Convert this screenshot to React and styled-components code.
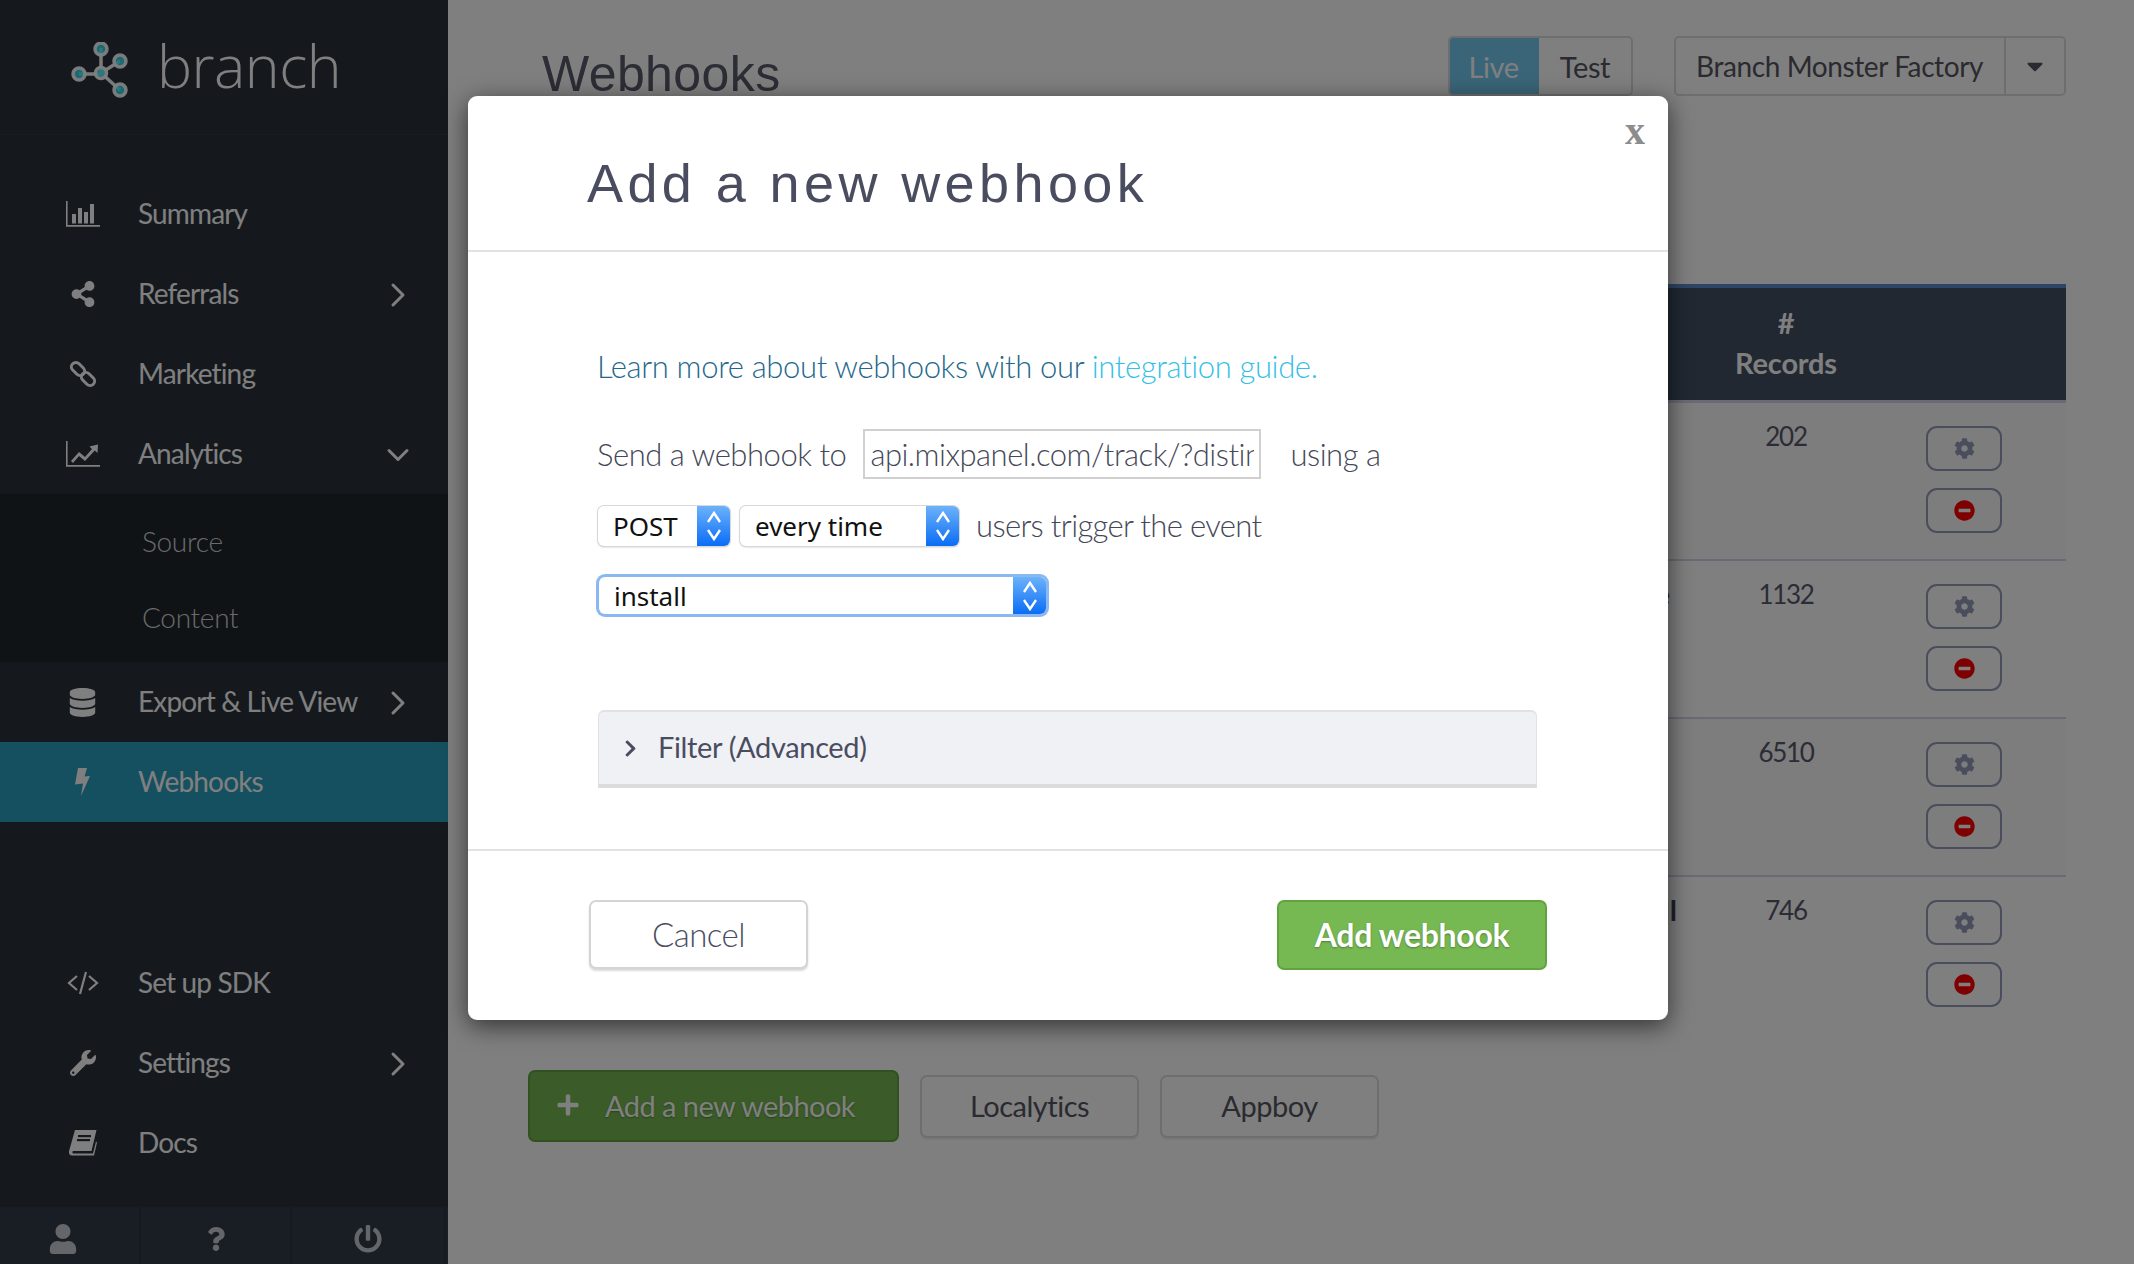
import styled, { createGlobalStyle } from "styled-components";
import {
  FaShareAlt,
  FaDatabase,
  FaWrench,
  FaUser,
  FaQuestion,
  FaPowerOff,
  FaCog,
  FaMinusCircle,
  FaPlus,
  FaCaretDown,
  FaChevronRight,
} from "react-icons/fa";
import { LuChevronRight, LuChevronDown } from "react-icons/lu";

const BarsIcon = () => (
  <svg width="34" height="26" viewBox="0 0 34 26" fill="currentColor">
    <path d="M0 0h1.6v24H34v1.8H0z" />
    <rect x="6" y="13" width="4" height="9.5" />
    <rect x="12" y="7" width="4" height="15.5" />
    <rect x="18" y="11" width="4" height="11.5" />
    <rect x="24" y="3" width="4" height="19.5" />
  </svg>
);

const LineChartIcon = () => (
  <svg width="34" height="26" viewBox="0 0 34 26" fill="currentColor">
    <path d="M0 0h1.6v24H34v1.8H0z" />
    <path d="M5 20l8-9 6 5 7-8-2.6-2.400L32 3.500 31.500 12l-2.700-2.600L19 20l-6-5-6 7z" />
  </svg>
);

const LinkIcon = () => (
  <svg width="28" height="28" viewBox="0 0 28 28" fill="none" stroke="currentColor" strokeWidth="3">
    <rect x="1.500" y="4.500" width="15" height="9" rx="4.500" transform="rotate(45 9 9)" />
    <rect x="11.500" y="14.500" width="15" height="9" rx="4.500" transform="rotate(45 19 19)" />
  </svg>
);

const CodeIcon = () => (
  <svg width="32" height="26" viewBox="0 0 32 26" fill="none" stroke="currentColor" strokeWidth="2.200">
    <path d="M10 6L2 13l8 7M22 6l8 7-8 7M19 2l-6 22" />
  </svg>
);

const BoltIcon = () => (
  <svg width="16" height="28" viewBox="0 0 16 28" fill="currentColor">
    <path d="M3 0h9L9.500 8.500l5.500-.5L6 28l2-12.500-8 1z" />
  </svg>
);

const BookIcon = () => (
  <svg width="28" height="26" viewBox="0 0 28 26" fill="currentColor">
    <path d="M6 0h21.500l-5 21H4.500c-1.500 0-1.500 2.500 0 2.500H24l3-12 1 1-3 13H3c-3 0-3.500-3-2.800-5z" />
    <rect x="9" y="5" width="13" height="2.200" fill="#2a323c" />
    <rect x="8" y="9" width="13" height="2.200" fill="#2a323c" />
  </svg>
);

const Logo = () => (
  <LogoMark width="60" height="60" viewBox="0 0 60 60">
    <g stroke="#ffffff" strokeOpacity="0.95" strokeWidth="3.500">
      <path d="M30 6V31M30 31L49 19M8 32H30M30 31L49 48" />
      <g fill="#3ef0ff" fillOpacity="0.85">
        <circle cx="30" cy="7" r="6" />
        <circle cx="49" cy="19" r="6" />
        <circle cx="8" cy="32" r="6" />
        <circle cx="30" cy="31" r="5.500" />
        <circle cx="49" cy="48" r="6" />
      </g>
    </g>
  </LogoMark>
);

const Stepper = () => (
  <StepperBox>
    <svg width="16" height="32" viewBox="0 0 16 32" fill="none" stroke="#fff" strokeWidth="2.400">
      <path d="M2 12l6-9 6 9M2 20l6 9 6-9" />
    </svg>
  </StepperBox>
);

const topNav = [
  { label: "Summary", icon: <BarsIcon /> },
  { label: "Referrals", icon: <FaShareAlt size={26} />, arrow: "right" },
  { label: "Marketing", icon: <LinkIcon /> },
  { label: "Analytics", icon: <LineChartIcon />, arrow: "down" },
];

const lowerNav = [
  { label: "Set up SDK", icon: <CodeIcon /> },
  { label: "Settings", icon: <FaWrench size={26} />, arrow: "right" },
  { label: "Docs", icon: <BookIcon /> },
];

const rows = [
  { records: 202, name: "", pad: 29 },
  { records: 1132, name: "Purchase", pad: 36 },
  { records: 6510, name: "", pad: 29 },
  { records: 746, name: "Install", pad: 29 },
];

function NavRow({ item, active }) {
  return (
    <NavItem $active={active}>
      <NavIcon>{item.icon}</NavIcon>
      <NavLabel>{item.label}</NavLabel>
      {item.arrow === "right" && (
        <NavArrow>
          <LuChevronRight size={40} strokeWidth={1.8} />
        </NavArrow>
      )}
      {item.arrow === "down" && (
        <NavArrow>
          <LuChevronDown size={36} strokeWidth={2} />
        </NavArrow>
      )}
    </NavItem>
  );
}

function App() {
  return (
    <Page>
      <GlobalStyle />
      <Sidebar>
        <Brand>
          <Logo />
          <BrandName>branch</BrandName>
        </Brand>
        <NavGroup>
          {topNav.map((item) => (
            <NavRow key={item.label} item={item} />
          ))}
          <SubMenu>
            <SubItem>Source</SubItem>
            <SubItem>Content</SubItem>
          </SubMenu>
          <NavRow item={{ label: "Export & Live View", icon: <FaDatabase size={29} />, arrow: "right" }} />
          <NavRow item={{ label: "Webhooks", icon: <BoltIcon /> }} active />
        </NavGroup>
        <LowerGroup>
          {lowerNav.map((item) => (
            <NavRow key={item.label} item={item} />
          ))}
        </LowerGroup>
        <SideFooter>
          <FootCell $w={141} $shift={14}>
            <FaUser size={30} />
          </FootCell>
          <FootCell $w={151}>
            <FaQuestion size={24} />
          </FootCell>
          <FootCell $w={154}>
            <FaPowerOff size={28} />
          </FootCell>
        </SideFooter>
      </Sidebar>

      <Main>
        <TopBar>
          <PageTitle>Webhooks</PageTitle>
          <Controls>
            <ModeGroup>
              <ModeButton $active>Live</ModeButton>
              <ModeButton>Test</ModeButton>
            </ModeGroup>
            <AppPicker>
              <AppName>Branch Monster Factory</AppName>
              <AppCaret>
                <FaCaretDown size={26} />
              </AppCaret>
            </AppPicker>
          </Controls>
        </TopBar>

        <Table>
          <TableHead>
            <span />
            <HeadCell>
              <div>#</div>
              <div>Records</div>
            </HeadCell>
            <span />
          </TableHead>
          {rows.map((row, i) => (
            <TableRow key={row.records} $alt={i % 2 === 0} $last={i === rows.length - 1}>
              <NameCell $pad={row.pad}>{row.name}</NameCell>
              <NumberCell>{row.records}</NumberCell>
              <ActionCell>
                <IconButton $color="#949ab8">
                  <FaCog size={21} />
                </IconButton>
                <IconButton $color="#ff0000">
                  <FaMinusCircle size={21} />
                </IconButton>
              </ActionCell>
            </TableRow>
          ))}
        </Table>

        <BottomActions>
          <AddNewButton $w={371} $h={72} $size={29} $weight={400}>
            <FaPlus size={24} />
            <span>Add a new webhook</span>
          </AddNewButton>
          <PlainButton $w={219} $h={63}>
            Localytics
          </PlainButton>
          <PlainButton $w={219} $h={63}>
            Appboy
          </PlainButton>
        </BottomActions>
      </Main>

      <Overlay>
        <Modal>
          <CloseMark>x</CloseMark>
          <ModalHeader>
            <ModalTitle>Add a new webhook</ModalTitle>
          </ModalHeader>
          <ModalBody>
            <LearnLine>
              Learn more about webhooks with our <LearnLink>integration guide.</LearnLink>
            </LearnLine>
            <SendRow>
              <FormText>Send a webhook to</FormText>
              <UrlInput readOnly value="api.mixpanel.com/track/?distinct_id=" />
              <FormText>using a</FormText>
            </SendRow>
            <SelectRow>
              <NativeSelect $w={132}>
                <SelectValue>POST</SelectValue>
                <Stepper />
              </NativeSelect>
              <NativeSelect $w={219}>
                <SelectValue>every time</SelectValue>
                <Stepper />
              </NativeSelect>
              <TriggerText>users trigger the event</TriggerText>
            </SelectRow>
            <FocusRow>
              <NativeSelect $w={447} $focus>
                <SelectValue>install</SelectValue>
                <Stepper />
              </NativeSelect>
            </FocusRow>
            <FilterBar>
              <FaChevronRight size={19} />
              <FilterLabel>Filter (Advanced)</FilterLabel>
            </FilterBar>
          </ModalBody>
          <ModalFooter>
            <CancelButton>Cancel</CancelButton>
            <GreenButton $w={270} $h={70} $size={32} $weight={700}>
              <ButtonLabel>Add webhook</ButtonLabel>
            </GreenButton>
          </ModalFooter>
        </Modal>
      </Overlay>
    </Page>
  );
}

export default App;

const GlobalStyle = createGlobalStyle`
  html, body {
    margin: 0;
    padding: 0;
    background: #fff;
  }
  body {
    font-family: "Lato", "Open Sans", sans-serif;
    color: #565666;
  }
  * {
    box-sizing: border-box;
  }
`;

const Page = styled.div`
  display: flex;
  width: 2134px;
  height: 1264px;
  overflow: hidden;
  position: relative;
`;

const Sidebar = styled.aside`
  width: 448px;
  height: 100%;
  flex: none;
  display: flex;
  flex-direction: column;
  background: #2a323c;
  color: #fff;
`;

const Brand = styled.div`
  height: 135px;
  display: flex;
  align-items: center;
  gap: 26px;
  padding: 0 0 0 71px;
  border-bottom: 1px solid #323a44;
`;

const LogoMark = styled.svg`
  margin-top: 9px;
  flex: none;
`;

const BrandName = styled.div`
  font-family: "Open Sans", sans-serif;
  font-weight: 300;
  font-size: 59px;
  letter-spacing: -0.5px;
  line-height: 1;
  margin-top: -4px;
`;

const NavGroup = styled.nav`
  margin-top: 39px;
  display: flex;
  flex-direction: column;
`;

const LowerGroup = styled.nav`
  margin-top: auto;
  display: flex;
  flex-direction: column;
`;

const NavItem = styled.div`
  height: 80px;
  display: flex;
  align-items: center;
  background: ${(p) => (p.$active ? "#2aa0c0" : "transparent")};
`;

const NavIcon = styled.span`
  width: 111px;
  margin-left: 27px;
  flex: none;
  display: flex;
  justify-content: center;
`;

const NavLabel = styled.span`
  flex: 1;
  margin-top: -3px;
  white-space: nowrap;
  font-size: 28px;
  font-weight: 400;
  letter-spacing: -0.85px;
`;

const NavArrow = styled.span`
  width: 40px;
  margin-right: 30px;
  flex: none;
  display: flex;
  justify-content: center;
  margin-top: 2px;
`;

const SubMenu = styled.div`
  height: 168px;
  background: #1e262c;
  padding: 9px 0 0 142px;
  display: flex;
  flex-direction: column;
`;

const SubItem = styled.div`
  height: 76px;
  display: flex;
  align-items: center;
  font-size: 28px;
  font-weight: 300;
  letter-spacing: -0.3px;
  color: #d4d4d4;
`;

const SideFooter = styled.div`
  margin-top: 22px;
  height: 59px;
  display: flex;
  background: #323c48;
  border-top: 2px solid #2c343e;
`;

const FootCell = styled.div`
  width: ${(p) => p.$w}px;
  display: flex;
  align-items: center;
  justify-content: center;
  padding-top: 6px;
  padding-right: ${(p) => p.$shift || 0}px;
  color: #c8ccd2;
  border-right: 2px solid #2c343e;
`;

const Main = styled.main`
  flex: 1;
  padding: 0 68px 0 80px;
  display: flex;
  flex-direction: column;
  min-width: 0;
`;

const TopBar = styled.div`
  height: 284px;
  display: flex;
  justify-content: space-between;
  align-items: flex-start;
`;

const PageTitle = styled.h1`
  margin: 44px 0 0 14px;
  font-family: "Liberation Sans", sans-serif;
  font-size: 50px;
  line-height: 60px;
  font-weight: 400;
  letter-spacing: 0.4px;
  color: #585a6a;
`;

const Controls = styled.div`
  margin-top: 36px;
  display: flex;
  gap: 41px;
`;

const ModeGroup = styled.div`
  width: 185px;
  height: 60px;
  display: flex;
  border: 2px solid #ddd;
  border-radius: 5px;
  overflow: hidden;
`;

const ModeButton = styled.div`
  flex: ${(p) => (p.$active ? "0 0 89px" : "1")};
  display: flex;
  align-items: center;
  justify-content: center;
  padding-right: ${(p) => (p.$active ? 2 : 0)}px;
  font-size: 29px;
  font-weight: 400;
  letter-spacing: -0.4px;
  color: ${(p) => (p.$active ? "#fff" : "#555560")};
  background: ${(p) => (p.$active ? "#74cbf0" : "transparent")};
`;

const AppPicker = styled.div`
  width: 392px;
  height: 60px;
  display: flex;
  border: 2px solid #ddd;
  border-radius: 5px;
`;

const AppName = styled.div`
  flex: 1;
  display: flex;
  align-items: center;
  padding-left: 20px;
  font-size: 28px;
  font-weight: 400;
  letter-spacing: -0.4px;
  color: #555560;
  border-right: 2px solid #ddd;
`;

const AppCaret = styled.div`
  width: 58px;
  display: flex;
  align-items: center;
  justify-content: center;
  color: #555560;
`;

const Table = styled.div`
  display: flex;
  flex-direction: column;
`;

const TableHead = styled.div`
  height: 119px;
  display: grid;
  grid-template-columns: 1178px 160px 1fr;
  background: #425064;
  border-top: 4px solid #5e8acc;
  border-bottom: 3px solid #d4d4ec;
`;

const HeadCell = styled.div`
  display: flex;
  flex-direction: column;
  align-items: center;
  padding-top: 15px;
  color: #fff;
  font-size: 29px;
  font-weight: 700;
  line-height: 40px;
  letter-spacing: -0.2px;
`;

const TableRow = styled.div`
  height: 158px;
  display: grid;
  grid-template-columns: 1178px 160px 1fr;
  background: ${(p) => (p.$alt ? "#fafafa" : "#fff")};
  border-bottom: ${(p) => (p.$last ? "none" : "2px solid #d4d4ec")};
`;

const NameCell = styled.div`
  text-align: right;
  padding: 13px ${(p) => p.$pad}px 0 0;
  font-size: 29px;
  line-height: 40px;
  font-weight: 700;
  color: #44444f;
`;

const NumberCell = styled.div`
  text-align: center;
  padding-top: 13px;
  font-size: 26px;
  line-height: 40px;
  letter-spacing: -1.3px;
  color: #58586c;
`;

const ActionCell = styled.div`
  padding: 23px 4px 0 0;
  display: flex;
  flex-direction: column;
  align-items: center;
  gap: 17px;
`;

const IconButton = styled.div`
  width: 76px;
  height: 45px;
  display: flex;
  align-items: center;
  justify-content: center;
  border: 2px solid #949ab8;
  border-radius: 11px;
  color: ${(p) => p.$color};
`;

const BottomActions = styled.div`
  margin-top: 35px;
  display: flex;
  align-items: center;
  gap: 21px;
`;

const GreenButton = styled.div`
  width: ${(p) => p.$w}px;
  height: ${(p) => p.$h}px;
  display: flex;
  align-items: center;
  justify-content: center;
  color: #fff;
  background: #76b852;
  border: 2px solid #62a341;
  border-radius: 7px;
  font-size: ${(p) => p.$size}px;
  font-weight: ${(p) => p.$weight};
  letter-spacing: -0.3px;
  text-shadow: 0 1px 2px rgba(0, 0, 0, 0.3);
`;

const AddNewButton = styled(GreenButton)`
  justify-content: flex-start;
  gap: 25px;
  padding: 0 0 2px 26px;
  letter-spacing: -0.55px;
`;

const ButtonLabel = styled.span`
  margin-top: -2px;
`;

const PlainButton = styled.div`
  width: ${(p) => p.$w}px;
  height: ${(p) => p.$h}px;
  display: flex;
  align-items: center;
  justify-content: center;
  padding-bottom: 2px;
  color: #555560;
  font-size: 29px;
  font-weight: 400;
  letter-spacing: -0.5px;
  border: 2px solid #ddd;
  border-radius: 7px;
  box-shadow: 0 2px 0 rgba(0, 0, 0, 0.06);
`;

const Overlay = styled.div`
  position: absolute;
  inset: 0;
  background: rgba(0, 0, 0, 0.5);
  padding: 96px 0 0 468px;
`;

const Modal = styled.div`
  position: relative;
  width: 1200px;
  background: #fff;
  border-radius: 9px;
  box-shadow: 0 6px 24px rgba(0, 0, 0, 0.6);
`;

const CloseMark = styled.div`
  position: absolute;
  top: 8px;
  right: 23px;
  font-family: "Liberation Serif", serif;
  font-weight: 700;
  font-size: 40px;
  line-height: 54px;
  color: #8c8c8c;
`;

const ModalHeader = styled.div`
  height: 156px;
  padding: 50px 0 0 119px;
  border-bottom: 2px solid #e2e2e2;
`;

const ModalTitle = styled.h2`
  margin: 0;
  font-family: "Liberation Sans", sans-serif;
  font-size: 54px;
  line-height: 74px;
  font-weight: 400;
  letter-spacing: 4.4px;
  color: #4a4d60;
`;

const ModalBody = styled.div`
  padding: 94px 0 0 130px;
`;

const LearnLine = styled.div`
  margin-left: -1px;
  font-size: 31px;
  line-height: 40px;
  font-weight: 300;
  letter-spacing: -0.36px;
  color: #23688c;
`;

const LearnLink = styled.span`
  color: #36bfe6;
`;

const SendRow = styled.div`
  margin: 43px 0 0 -1px;
  height: 50px;
  display: flex;
  align-items: center;
`;

const FormText = styled.span`
  font-size: 31px;
  font-weight: 300;
  letter-spacing: -0.47px;
  color: #444758;
`;

const UrlInput = styled.input`
  width: 398px;
  height: 50px;
  margin: 0 29px 0 17px;
  padding: 0 5px;
  font-family: "Lato", sans-serif;
  font-size: 31px;
  font-weight: 300;
  letter-spacing: -0.5px;
  color: #444758;
  border: 2px solid #d0d0d0;
  outline: none;
  background: #fff;
`;

const SelectRow = styled.div`
  margin-top: 27px;
  display: flex;
  align-items: center;
  gap: 10px;
`;

const TriggerText = styled(FormText)`
  margin: -2px 0 0 7px;
  letter-spacing: -0.65px;
`;

const FocusRow = styled.div`
  margin: 31px 0 0 1px;
  display: flex;
`;

const NativeSelect = styled.div`
  width: ${(p) => p.$w}px;
  height: ${(p) => (p.$focus ? 37 : 40)}px;
  display: flex;
  background: #fff;
  border-radius: 6px;
  overflow: hidden;
  box-shadow: ${(p) =>
    p.$focus
      ? "0 0 0 3px #8ab8f0"
      : "0 0 0 1px #d8d8d8, 0 1px 2px rgba(0, 0, 0, 0.3)"};
`;

const SelectValue = styled.div`
  flex: 1;
  display: flex;
  align-items: center;
  padding-left: 15px;
  font-family: "Noto Sans", sans-serif;
  font-size: 26px;
  color: #111;
`;

const StepperBox = styled.div`
  width: 33px;
  flex: none;
  display: flex;
  align-items: center;
  justify-content: center;
  background: linear-gradient(#6cb2fb, #0a6df5);
`;

const FilterBar = styled.div`
  margin-top: 96px;
  width: 939px;
  height: 78px;
  display: flex;
  align-items: center;
  gap: 18px;
  padding: 0 0 0 22px;
  font-size: 29px;
  letter-spacing: -0.35px;
  color: #4a4d60;
  background: #f0f1f5;
  border: 1px solid #e2e2e2;
  border-top-width: 2px;
  border-bottom: 4px solid #dcdcdc;
  border-radius: 6px 6px 0 0;
`;

const FilterLabel = styled.span`
  margin-top: -3px;
`;

const ModalFooter = styled.div`
  margin-top: 61px;
  height: 171px;
  padding: 49px 121px 0;
  display: flex;
  justify-content: space-between;
  align-items: flex-start;
  border-top: 2px solid #e2e2e2;
`;

const CancelButton = styled.div`
  width: 219px;
  height: 69px;
  display: flex;
  align-items: center;
  justify-content: center;
  padding-bottom: 2px;
  font-size: 33px;
  font-weight: 300;
  letter-spacing: -0.5px;
  color: #4a4d60;
  background: #fff;
  border: 2px solid #d4d4d4;
  border-radius: 7px;
  box-shadow: 0 2px 2px rgba(0, 0, 0, 0.15);
`;
